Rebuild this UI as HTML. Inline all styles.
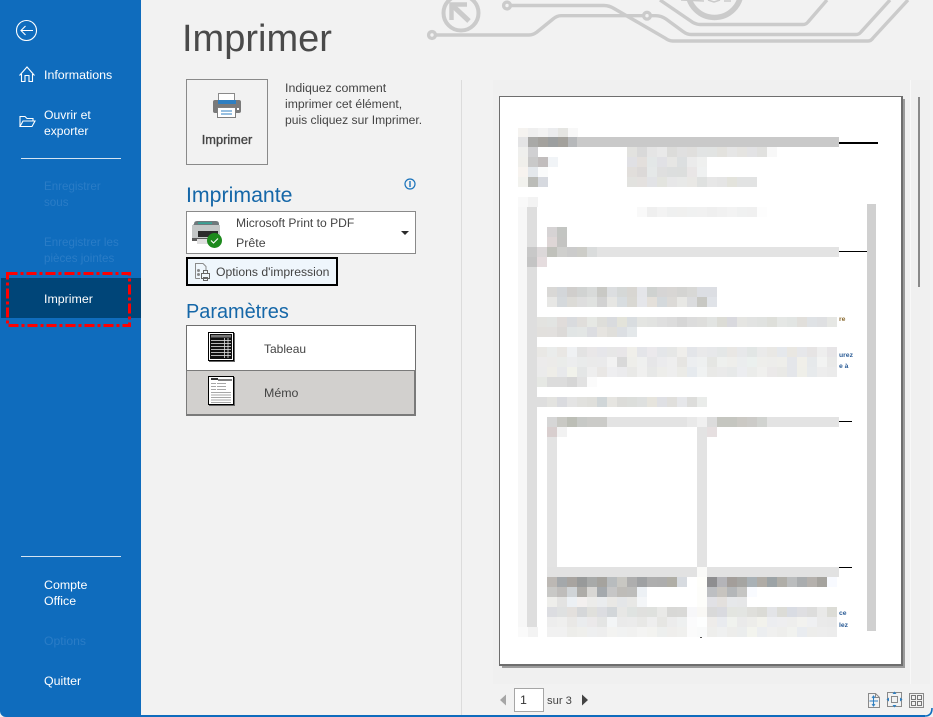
<!DOCTYPE html>
<html lang="fr"><head><meta charset="utf-8"><title>Imprimer</title>
<style>
html,body{margin:0;padding:0;width:933px;height:717px;overflow:hidden;background:#f2f2f2}
body{position:relative;font-family:"Liberation Sans",sans-serif;font-size:12.4px;color:#444}
.t{position:absolute;white-space:nowrap;line-height:16px}
.n{color:#fff}.d{color:#2a7cc6;font-size:11.6px}
.b{position:absolute}
.r{position:absolute;display:flex;height:10px}
.r i{display:block;width:10px;height:10px;flex:none}
.x{font-size:6.8px;font-weight:bold;color:#2b5c96}
svg{position:absolute;left:0;top:0}
</style></head><body>

<!-- circuit background -->
<svg width="933" height="60" viewBox="0 0 933 60" fill="none" stroke="#cbcbcb" stroke-width="3.4">
<path d="M507 5.5H604Q609 5.5 614 8.5L665 38Q669 41 673 41H868Q871 41 873 38L908 0"/>
<path d="M432 35H529Q533 35 537 32L553 19Q557 15.7 561 15.7H656Q661 15.7 666 19L683 31.5Q687 34.5 691 34.5H856Q859 34.5 861 32L890 0"/>
<path d="M660 0L693 22.5Q697 24.5 700 24.5H803Q806 24.5 808 22L827 0"/>
<circle cx="507" cy="5.5" r="3.4" fill="#f2f2f2"/><circle cx="432" cy="35" r="3.4" fill="#f2f2f2"/><circle cx="647" cy="15.7" r="3.4" fill="#f2f2f2"/>
<circle cx="714.5" cy="-9" r="26.5" stroke-width="5.5"/>
<circle cx="461" cy="13" r="17.5" stroke-width="4"/>
<path d="M451.5 20V4.5H467" stroke-width="4.4"/><path d="M453 6L469 21" stroke-width="5"/>
<path d="M681 0L704 1M714 2L708 0M714 2L720 0M724 1L731 1" stroke-width="1.5"/>
</svg>

<!-- frame & sidebar -->
<div class="b" style="left:0;top:0;width:141px;height:717px;background:#0f6cbd;border-bottom-left-radius:6px"></div>
<div class="b" style="left:141px;top:715px;width:784px;height:2px;background:#0f6cbd"></div>
<svg width="933" height="717" fill="none"><path d="M924 716H925Q932 716 932 708" stroke="#0f6cbd" stroke-width="1.6"/></svg>
<div class="b" style="left:1px;top:278px;width:140px;height:40px;background:#004578"></div>

<svg width="141" height="340" fill="none" stroke="#fff">
<circle cx="26.5" cy="30.5" r="10" stroke-width="1.1"/>
<path d="M21 30.5H33M25.5 26L21 30.5L25.5 35" stroke-width="1.1"/>
<path d="M19.5 75.5L27 67L34.5 75.5M21.5 74V81.5H25V75.5H29V81.5H32.5V74" stroke-width="1.1"/>
<path d="M20 126.5V116.5H25L27 118.5H33V121M20 126.5L23 121H35L32 126.5Z" stroke-width="1.1"/>
</svg>
<div class="t n" style="left:44px;top:67px">Informations</div>
<div class="t n" style="left:44px;top:107px;font-size:12.2px">Ouvrir et</div>
<div class="t n" style="left:44px;top:123px;font-size:12.1px">exporter</div>
<div class="b" style="left:21px;top:158px;width:100px;height:1px;background:#d5e4f2"></div>
<div class="t d" style="left:44px;top:179px">Enregistrer</div>
<div class="t d" style="left:44px;top:195px">sous</div>
<div class="t d" style="left:44px;top:235px">Enregistrer les</div>
<div class="t d" style="left:44px;top:251px">pièces jointes</div>
<div class="t n" style="left:44px;top:291px">Imprimer</div>
<div class="b" style="left:21px;top:556px;width:100px;height:1px;background:#d5e4f2"></div>
<div class="t n" style="left:44px;top:577px">Compte</div>
<div class="t n" style="left:44px;top:593px">Office</div>
<div class="t d" style="left:44px;top:633px;font-size:12.2px">Options</div>
<div class="t n" style="left:44px;top:673px">Quitter</div>
<svg width="141" height="340" fill="none"><rect x="7.5" y="273.5" width="122" height="52" stroke="#f00" stroke-width="3" stroke-dasharray="10 3 3 3"/></svg>

<!-- title -->
<div class="t" style="left:182px;top:17px;font-size:38px;line-height:44px;color:#4a4a4a">Imprimer</div>

<!-- print button -->
<div class="b" style="left:186px;top:79px;width:80px;height:84px;border:1px solid #8a8a8a"></div>
<svg width="300" height="130" viewBox="0 0 300 130">
<path fill="#fff" stroke="#8a8a8a" d="M218.5 93.5H234.5V102H218.5Z"/>
<rect x="213" y="100" width="28" height="13" rx="2" fill="#7a7a7a"/>
<rect x="218" y="100" width="18" height="4" fill="#2f7fc1"/>
<rect x="217.5" y="107.5" width="18" height="10" fill="#fff" stroke="#7f7f7f"/>
<path d="M221 111H232M221 114H232" stroke="#2f7fc1"/>
<rect x="237" y="108" width="2" height="2" fill="#fff"/>
</svg>
<div class="t" style="left:186px;top:132px;width:82px;text-align:center;font-size:12.8px;-webkit-text-stroke:.35px #444">Imprimer</div>
<div class="t" style="left:285px;top:80px">Indiquez comment</div>
<div class="t" style="left:285px;top:96px;font-size:12.2px">imprimer cet élément,</div>
<div class="t" style="left:285px;top:112px;font-size:12.1px">puis cliquez sur Imprimer.</div>

<!-- imprimante -->
<div class="t" style="left:186px;top:182px;font-size:21.3px;line-height:26px;color:#1567a8">Imprimante</div>
<svg width="430" height="200" fill="none"><circle cx="410" cy="184" r="5" stroke="#1a73bb" stroke-width="1.2"/><path d="M410 181V187" stroke="#1a73bb" stroke-width="1.4"/></svg>
<div class="b" style="left:186px;top:211px;width:228px;height:41px;border:1px solid #8a8a8a;background:#fff"></div>
<svg width="430" height="300">
<path d="M194 224Q194 221 197 221H216Q219 221 219 224V226H192Z" fill="#70797c"/>
<rect x="192" y="225" width="28" height="15" fill="#c4c7c7"/>
<rect x="198" y="222.5" width="14" height="1.2" fill="#1fb5a0"/>
<rect x="198" y="231" width="20" height="6" fill="#2b2b2b"/>
<rect x="192" y="238" width="28" height="3" fill="#5c5c5c"/>
<rect x="197" y="239" width="17" height="5" fill="#dfdfdf"/>
<circle cx="214.5" cy="240.5" r="7.5" fill="#1d8a1d"/>
<path d="M211 240.5L213.5 243L218 238.5" fill="none" stroke="#fff" stroke-width="1.1"/>
<path d="M401 231H409L405 235Z" fill="#2b2b2b"/>
</svg>
<div class="t" style="left:236px;top:215px;font-size:12.1px">Microsoft Print to PDF</div>
<div class="t" style="left:236px;top:235px">Prête</div>
<div class="b" style="left:186px;top:257px;width:148px;height:25px;border:2px solid #000;background:#eff6fc"></div>
<svg width="430" height="300" fill="none" stroke="#8a8a8a">
<path d="M195.5 278.5V263.5H203L206 266.5V270M195.5 278.5H200"/>
<circle cx="198.5" cy="270.5" r="1" fill="#8a8a8a"/><circle cx="198.5" cy="274.5" r="1" fill="#8a8a8a"/>
<path d="M203.5 270.5H207.5V273.5H203.5ZM201.5 273.5H209.5V278.5H201.5ZM203.5 277.5H207.5V280.5H203.5Z" stroke="#666"/>
</svg>
<div class="t" style="left:216px;top:264px;font-size:12.2px">Options d'impression</div>

<!-- parametres -->
<div class="t" style="left:186px;top:299px;font-size:19.9px;line-height:26px;color:#1567a8">Paramètres</div>
<div class="b" style="left:186px;top:325px;width:228px;height:44px;border:1px solid #6e6e6e;border-bottom:0;background:#fff"></div>
<div class="b" style="left:186px;top:370px;width:227px;height:43px;border:solid #7a7a7a;border-width:1px 2px 2px 1px;background:#d2d0ce"></div>
<div class="t" style="left:264px;top:341px;font-size:12px">Tableau</div>
<div class="t" style="left:264px;top:385px">Mémo</div>
<svg width="430" height="420">
<rect x="209" y="333" width="26" height="29" fill="#666"/>
<rect x="208.5" y="332.5" width="25" height="28" fill="#fff" stroke="#000"/>
<rect x="210" y="334" width="22" height="25" fill="#111"/>
<rect x="211" y="335" width="20" height="2.5" fill="#777"/>
<path d="M211 340.5H231M211 343.5H231M211 346.5H231M211 349.5H231M211 352.5H231M211 355.5H231" stroke="#eee" stroke-width=".8"/>
<path d="M224.5 338V358M228 338V358" stroke="#ddd" stroke-width=".8"/>
<rect x="209" y="377" width="26" height="29" fill="#666"/>
<rect x="208.5" y="376.5" width="25" height="28" fill="#fff" stroke="#000"/>
<path d="M211 379H218" stroke="#000" stroke-width="1.6"/><path d="M218 380H232" stroke="#000"/>
<path d="M211 383.5H216M211 386.5H216M211 389.5H216M217 383.5H226M217 386.5H226M217 389.5H226M211 392.5H231M211 395H231M211 397.5H231M211 400H231M211 402.5H231" stroke="#8a8a8a" stroke-width=".8"/>
</svg>

<!-- preview pane -->
<div class="b" style="left:461px;top:80px;width:1px;height:635px;background:#dcdcdc"></div>
<div class="b" style="left:493px;top:80px;width:437px;height:604px;background:#f0f0f0"></div>
<div class="b" style="left:910px;top:80px;width:1px;height:604px;background:#f8f8f8"></div>
<div class="b" style="left:918px;top:97px;width:2px;height:190px;background:#8a8a8a"></div>
<div class="b" style="left:502px;top:99px;width:403px;height:569px;background:#9c9c9c"></div>
<div class="b" style="left:499px;top:96px;width:401px;height:567px;border:1px solid #6e6e6e;border-right-width:2px;border-bottom-width:2px;background:#fff"></div>

<!-- blurred document -->
<div class="r" style="left:518px;top:128px"><i style="background:#f5f3f0"></i><i style="background:#efefef"></i><i style="background:#f3f3f3"></i><i style="background:#ebecee"></i><i style="background:#e5e5e2"></i><i style="background:#f8f8f8"></i></div>
<div class="r" style="left:518px;top:137px"><i style="background:#e4e4e5"></i><i style="background:#a9a9a7"></i><i style="background:#a4a29e"></i><i style="background:#9c9fa0"></i><i style="background:#a3a19c"></i><i style="background:#b6b8ba"></i></div>
<div class="b" style="left:577px;top:137px;width:262px;height:10px;background:#c9c9c9"></div>
<div class="b" style="left:839px;top:142px;width:39px;height:2px;background:#000"></div>
<div class="r" style="left:518px;top:147px"><i style="background:#efefed"></i><i style="background:#d0d0d2"></i></div>
<div class="r" style="left:518px;top:157px"><i style="background:#f0efeb"></i><i style="background:#c9c9c9"></i><i style="background:#c1bdbd"></i><i style="background:#f1f4f7"></i></div>
<div class="r" style="left:518px;top:167px"><i style="background:#f7f3ef"></i><i style="background:#e4e8ec"></i><i style="background:#fafbfb"></i></div>
<div class="r" style="left:518px;top:177px"><i style="background:#f2f2ee"></i><i style="background:#bbbcb8"></i><i style="background:#d6d9df"></i></div>
<div class="r" style="left:627px;top:147px"><i style="background:#e2e2df"></i><i style="background:#d9d9d9"></i><i style="background:#e5e5e5"></i><i style="background:#e9e9e9"></i><i style="background:#dcdcda"></i><i style="background:#e0e0e0"></i><i style="background:#e0dfdd"></i><i style="background:#e2e4e4"></i><i style="background:#e2e4e3"></i><i style="background:#e3e2de"></i><i style="background:#e6e6e6"></i><i style="background:#e5e4e1"></i><i style="background:#e3e3e5"></i><i style="background:#e1e1df"></i><i style="background:#f8f8f8"></i></div>
<div class="r" style="left:627px;top:157px"><i style="background:#e0e0e4"></i><i style="background:#e3dfdc"></i><i style="background:#e3e7e7"></i><i style="background:#e1e1e5"></i><i style="background:#e6e6e4"></i><i style="background:#dcdfe0"></i><i style="background:#ebebeb"></i><i style="background:#eff0ef"></i></div>
<div class="r" style="left:627px;top:167px"><i style="background:#e1dedb"></i><i style="background:#dcd9d8"></i><i style="background:#e5e8e8"></i><i style="background:#dfdfdf"></i><i style="background:#dcdede"></i><i style="background:#dcdedd"></i><i style="background:#e9e6e6"></i><i style="background:#eff1f1"></i></div>
<div class="r" style="left:627px;top:177px"><i style="background:#e2e2df"></i><i style="background:#e4e1df"></i><i style="background:#e2e3e6"></i><i style="background:#e3e4df"></i><i style="background:#e7e7e8"></i><i style="background:#e8e9e8"></i><i style="background:#e9e8e5"></i><i style="background:#dfe1e0"></i><i style="background:#e7e7e7"></i><i style="background:#e5e5e5"></i><i style="background:#e3e3dc"></i><i style="background:#e2e3e3"></i><i style="background:#e2e3e3"></i></div>
<div class="r" style="left:518px;top:197px"><i style="background:#f9f9f9"></i><i style="background:#f3f3f3"></i></div>
<div class="b" style="left:518px;top:207px;width:9px;height:420px;background:#f7f7f7"></div>
<div class="b" style="left:527px;top:207px;width:10px;height:420px;background:#dedede"></div>
<div class="r" style="left:518px;top:627px"><i style="background:#fafafa"></i><i style="background:#f3f3f3"></i></div>
<div class="r" style="left:637px;top:207px"><i style="background:#f9f9f9"></i><i style="background:#efefef"></i><i style="background:#f3f3f3"></i><i style="background:#eff0f0"></i><i style="background:#f0f0ef"></i><i style="background:#f0f1f1"></i><i style="background:#f1f1f1"></i><i style="background:#efefef"></i><i style="background:#f1f1f1"></i><i style="background:#f3f3f3"></i><i style="background:#f0f1f1"></i><i style="background:#f0f0f0"></i><i style="background:#fdfdfd"></i></div>
<div class="r" style="left:547px;top:227px"><i style="background:#d6d3d4"></i><i style="background:#c3c5c2"></i></div>
<div class="r" style="left:547px;top:237px"><i style="background:#ded6d6"></i><i style="background:#c4c4c2"></i></div>
<div class="r" style="left:527px;top:247px"><i style="background:#c8c8c8"></i><i style="background:#dcd8d9"></i><i style="background:#c0c1bb"></i><i style="background:#cfcfcd"></i><i style="background:#cbcbcb"></i><i style="background:#cdcdc8"></i><i style="background:#dadcdc"></i></div>
<div class="b" style="left:597px;top:247px;width:242px;height:10px;background:#e3e3e3"></div>
<div class="b" style="left:839px;top:251px;width:28px;height:1px;background:#000"></div>
<div class="r" style="left:527px;top:257px"><i style="background:#c4c4c4"></i><i style="background:#e5dcde"></i></div>
<div class="r" style="left:547px;top:287px"><i style="background:#d9d8d6"></i><i style="background:#d3d6d9"></i><i style="background:#d0cecc"></i><i style="background:#d1d3d2"></i><i style="background:#d8dad9"></i><i style="background:#c9c9c5"></i><i style="background:#dcdee0"></i><i style="background:#d5d8d7"></i><i style="background:#d8d6d2"></i><i style="background:#e4e5e9"></i><i style="background:#cfd2d0"></i><i style="background:#d6d5d5"></i><i style="background:#d8d6d4"></i><i style="background:#d4d4d2"></i><i style="background:#d8d8d6"></i><i style="background:#dcdee3"></i><i style="background:#dcdee3"></i></div>
<div class="r" style="left:547px;top:297px"><i style="background:#e7e7e5"></i><i style="background:#d5d9dc"></i><i style="background:#dcdbd7"></i><i style="background:#dedede"></i><i style="background:#e0e2e0"></i><i style="background:#d2d2d2"></i><i style="background:#e6e6e3"></i><i style="background:#d8dde0"></i><i style="background:#d9d8d3"></i><i style="background:#e5e6ea"></i><i style="background:#e4e0da"></i><i style="background:#d4d9dc"></i><i style="background:#dcdad7"></i><i style="background:#e8e8e5"></i><i style="background:#dbdcde"></i><i style="background:#c8c8c3"></i><i style="background:#e0e3e8"></i></div>
<div class="r" style="left:537px;top:317px"><i style="background:#e3e3e0"></i><i style="background:#e2e4e2"></i><i style="background:#e0dcda"></i><i style="background:#d9dbde"></i><i style="background:#e0dedb"></i><i style="background:#e6e8e4"></i><i style="background:#dededa"></i><i style="background:#d9dbde"></i><i style="background:#e3e3da"></i><i style="background:#d9dde0"></i><i style="background:#e4e5e2"></i><i style="background:#e2e3e1"></i><i style="background:#dfdfdf"></i><i style="background:#dcdcdc"></i><i style="background:#d6d6d6"></i><i style="background:#dcdcdc"></i><i style="background:#dededc"></i><i style="background:#e2e4e2"></i><i style="background:#dcdcd6"></i><i style="background:#d9d9de"></i><i style="background:#e5e5e2"></i><i style="background:#e2e3e2"></i><i style="background:#e0e2e0"></i><i style="background:#dedfda"></i><i style="background:#e5e7e5"></i><i style="background:#e2e5e3"></i><i style="background:#e1dfdb"></i><i style="background:#dfe2e5"></i><i style="background:#dfe0e2"></i><i style="background:#e6e7e4"></i></div>
<div class="r" style="left:537px;top:327px"><i style="background:#e2e0dd"></i><i style="background:#e2e0de"></i><i style="background:#dcdad8"></i><i style="background:#e1e5e5"></i><i style="background:#e3e6e5"></i><i style="background:#dcdde1"></i><i style="background:#e6e4e0"></i><i style="background:#e0dfdb"></i><i style="background:#dcdfe3"></i><i style="background:#e4e8ea"></i></div>
<div class="r" style="left:537px;top:347px"><i style="background:#e9e8e5"></i><i style="background:#eaeceb"></i><i style="background:#e9e7e4"></i><i style="background:#eff1f3"></i><i style="background:#e3e3e3"></i><i style="background:#e9e7e8"></i><i style="background:#e6e6ea"></i><i style="background:#e7e7e7"></i><i style="background:#e8e6e8"></i><i style="background:#f0efea"></i><i style="background:#e4e5e9"></i><i style="background:#ebe9ec"></i><i style="background:#e4e6e9"></i><i style="background:#e6e7e6"></i><i style="background:#efeeeb"></i><i style="background:#e3e5e9"></i><i style="background:#e9e9ea"></i><i style="background:#e7e8ea"></i><i style="background:#e4e7e7"></i><i style="background:#e9e7e4"></i><i style="background:#e7e8ea"></i><i style="background:#e2e6e5"></i><i style="background:#eaeaea"></i><i style="background:#e9e8e5"></i><i style="background:#e5e8ec"></i><i style="background:#e9e7e2"></i><i style="background:#e6e7ea"></i><i style="background:#e6e4e4"></i><i style="background:#eeeeee"></i><i style="background:#e7e5e7"></i></div>
<div class="r" style="left:537px;top:357px"><i style="background:#ecebeb"></i><i style="background:#ecebe9"></i><i style="background:#eaecea"></i><i style="background:#ecedee"></i><i style="background:#e9ebeb"></i><i style="background:#eaeaea"></i><i style="background:#eaeaeb"></i><i style="background:#f2f2f2"></i><i style="background:#d9d9d9"></i><i style="background:#eeeeea"></i><i style="background:#eff0ef"></i><i style="background:#e6e6e8"></i><i style="background:#ebebed"></i><i style="background:#eeeeee"></i><i style="background:#e6e5e2"></i><i style="background:#eceef0"></i><i style="background:#eef0f0"></i><i style="background:#e5e6e3"></i><i style="background:#eef0ee"></i><i style="background:#eeeeeb"></i><i style="background:#ebedee"></i><i style="background:#ebf0ee"></i><i style="background:#eeeeeb"></i><i style="background:#ededeb"></i><i style="background:#eeeeea"></i><i style="background:#e4e6ea"></i><i style="background:#f0efe9"></i><i style="background:#e6e9eb"></i><i style="background:#f2f3f2"></i><i style="background:#e9e9e8"></i></div>
<div class="r" style="left:537px;top:367px"><i style="background:#ebebeb"></i><i style="background:#eeede8"></i><i style="background:#e8e9eb"></i><i style="background:#f1f2eb"></i><i style="background:#e4e6e6"></i><i style="background:#eeeeee"></i><i style="background:#e9e7e5"></i><i style="background:#eeeef0"></i><i style="background:#ebebed"></i><i style="background:#e9e9e7"></i><i style="background:#f0f0ef"></i><i style="background:#e7e8e7"></i><i style="background:#ededea"></i><i style="background:#eeeeee"></i><i style="background:#ebebe7"></i><i style="background:#e6eaee"></i><i style="background:#f0f2f2"></i><i style="background:#e9e9e7"></i><i style="background:#eaeaea"></i><i style="background:#e7e9e9"></i><i style="background:#ecedf0"></i><i style="background:#ebecea"></i><i style="background:#f0f0ee"></i><i style="background:#ebe9e9"></i><i style="background:#e9e9e6"></i><i style="background:#e4e6ea"></i><i style="background:#efefe9"></i><i style="background:#e7eaec"></i><i style="background:#ededed"></i><i style="background:#ebebeb"></i></div>
<div class="r" style="left:537px;top:377px"><i style="background:#e6e8e4"></i><i style="background:#dcdcdc"></i><i style="background:#dcdcdc"></i><i style="background:#d6d6d6"></i><i style="background:#e2e2e2"></i><i style="background:#fbfbfb"></i></div>
<div class="r" style="left:537px;top:397px"><i style="background:#dedede"></i><i style="background:#e3e3e0"></i><i style="background:#dadbdf"></i><i style="background:#e4e4e4"></i><i style="background:#e1e1de"></i><i style="background:#dfdfdb"></i><i style="background:#d0d6d8"></i><i style="background:#e6e5e1"></i><i style="background:#dcdcd9"></i><i style="background:#dcdedb"></i><i style="background:#dee0df"></i><i style="background:#e6e4dd"></i><i style="background:#dfe0e4"></i><i style="background:#e0dfdc"></i><i style="background:#e6e7ea"></i><i style="background:#dddddb"></i><i style="background:#eaecea"></i></div>
<div class="r" style="left:547px;top:417px"><i style="background:#d6d6d6"></i><i style="background:#c9c9c4"></i><i style="background:#bcbeb6"></i><i style="background:#c7c9c6"></i><i style="background:#cbcbc8"></i><i style="background:#cbcbc8"></i></div>
<div class="b" style="left:607px;top:417px;width:80px;height:10px;background:#e3e3e3"></div>
<div class="r" style="left:687px;top:417px"><i style="background:#e9e9e9"></i><i style="background:#f0f0f0"></i><i style="background:#dcdcdc"></i><i style="background:#c5c6c0"></i><i style="background:#c5c6c0"></i><i style="background:#cbc9c4"></i><i style="background:#cccbc8"></i><i style="background:#d1d3d0"></i></div>
<div class="b" style="left:767px;top:417px;width:72px;height:10px;background:#e3e3e3"></div>
<div class="b" style="left:839px;top:421px;width:13px;height:1px;background:#000"></div>
<div class="r" style="left:547px;top:427px"><i style="background:#d8cece"></i><i style="background:#f2f2f2"></i></div>
<div class="r" style="left:697px;top:427px"><i style="background:#e3e3e3"></i><i style="background:#e6dfe0"></i></div>
<div class="b" style="left:547px;top:437px;width:10px;height:130px;background:#e3e3e3"></div>
<div class="b" style="left:697px;top:437px;width:10px;height:130px;background:#e3e3e3"></div>
<div class="b" style="left:547px;top:567px;width:150px;height:10px;background:#e2e2e2"></div>
<div class="b" style="left:697px;top:567px;width:10px;height:10px;background:#fafaf8"></div>
<div class="b" style="left:707px;top:567px;width:132px;height:10px;background:#e2e2e2"></div>
<div class="b" style="left:839px;top:567px;width:13px;height:1px;background:#000"></div>
<div class="r" style="left:547px;top:577px"><i style="background:#bcb8b4"></i><i style="background:#a4a8ab"></i><i style="background:#a8a4a0"></i><i style="background:#989a9a"></i><i style="background:#a8aaa9"></i><i style="background:#a5a39e"></i><i style="background:#b8bcbe"></i><i style="background:#c8c7c2"></i><i style="background:#aeaeae"></i><i style="background:#9fa1a3"></i><i style="background:#aeaeae"></i><i style="background:#adadad"></i><i style="background:#b0aea6"></i><i style="background:#d7dbe0"></i></div>
<div class="r" style="left:697px;top:577px"><i style="background:#fefefa"></i><i style="background:#8e8e90"></i><i style="background:#b4b4b8"></i><i style="background:#a39e9a"></i><i style="background:#a5a5a2"></i><i style="background:#a9b1b6"></i><i style="background:#b0aca6"></i><i style="background:#9ca3a6"></i><i style="background:#b0aea8"></i><i style="background:#bbbdbe"></i><i style="background:#aaadaf"></i><i style="background:#b5b1ad"></i><i style="background:#a5a39e"></i><i style="background:#f8faff"></i></div>
<div class="r" style="left:547px;top:587px"><i style="background:#c8c8c6"></i><i style="background:#bfbdbb"></i><i style="background:#d0d4d7"></i><i style="background:#aeaca8"></i><i style="background:#d8d7d4"></i><i style="background:#a4a9ad"></i><i style="background:#c6c6c6"></i><i style="background:#bebcb8"></i><i style="background:#bdbdbb"></i><i style="background:#edf1f5"></i></div>
<div class="r" style="left:697px;top:587px"><i style="background:#fdfdfa"></i><i style="background:#bdbfc2"></i><i style="background:#c7c4bf"></i><i style="background:#b4b7b9"></i><i style="background:#c5c5c3"></i><i style="background:#f9fbff"></i></div>
<div class="r" style="left:547px;top:597px"><i style="background:#eeeeeb"></i><i style="background:#e3e3e2"></i><i style="background:#ecf0f4"></i><i style="background:#f3f0ef"></i><i style="background:#ececea"></i><i style="background:#eaecee"></i><i style="background:#e9e8e5"></i><i style="background:#e4e6e8"></i><i style="background:#e8e8e6"></i><i style="background:#f4f6f8"></i></div>
<div class="r" style="left:697px;top:597px"><i style="background:#fdfdfa"></i><i style="background:#e1e1e5"></i><i style="background:#e3e0dd"></i><i style="background:#e6e8ea"></i><i style="background:#e6e7e8"></i></div>
<div class="r" style="left:547px;top:607px"><i style="background:#dcdde1"></i><i style="background:#dfe1e1"></i><i style="background:#e3e0dd"></i><i style="background:#d5d7d9"></i><i style="background:#e0e0dc"></i><i style="background:#dcdde1"></i><i style="background:#d2d6d9"></i><i style="background:#e7e7e5"></i><i style="background:#dfe3e1"></i><i style="background:#e0e0de"></i><i style="background:#dfe1de"></i><i style="background:#e9e9e7"></i><i style="background:#d8d8d6"></i><i style="background:#d9d9d7"></i><i style="background:#f7f7f9"></i><i style="background:#f9f8f5"></i><i style="background:#d9d9d9"></i><i style="background:#d9dadf"></i><i style="background:#e3e5e0"></i><i style="background:#e3e5e2"></i><i style="background:#dfdfdb"></i><i style="background:#dbdbd6"></i><i style="background:#e3e4e7"></i><i style="background:#dcdcd7"></i><i style="background:#d9dce3"></i><i style="background:#dfdfe2"></i><i style="background:#dddddc"></i><i style="background:#e9e9e8"></i><i style="background:#dcdcd6"></i></div>
<div class="r" style="left:547px;top:617px"><i style="background:#ededed"></i><i style="background:#efefee"></i><i style="background:#e9e8e6"></i><i style="background:#eaecee"></i><i style="background:#ebe9ea"></i><i style="background:#e4e5e4"></i><i style="background:#f3f5f6"></i><i style="background:#eaeaea"></i><i style="background:#ebebeb"></i><i style="background:#e8e8e6"></i><i style="background:#eeeeee"></i><i style="background:#e6e6e3"></i><i style="background:#ececec"></i><i style="background:#eef0f0"></i><i style="background:#fbfbfc"></i><i style="background:#fdfefe"></i><i style="background:#eeecea"></i><i style="background:#e9ebef"></i><i style="background:#f0f2ee"></i><i style="background:#eaeaea"></i><i style="background:#ededea"></i><i style="background:#f2f2ec"></i><i style="background:#ecedf0"></i><i style="background:#eeeef0"></i><i style="background:#eeeeed"></i><i style="background:#f2f2ef"></i><i style="background:#eff0f2"></i><i style="background:#eaeaea"></i><i style="background:#e9e9e9"></i></div>
<div class="r" style="left:547px;top:627px"><i style="background:#f1f1f1"></i><i style="background:#f1f1f1"></i><i style="background:#ededea"></i><i style="background:#efefec"></i><i style="background:#eeeff0"></i><i style="background:#eeeeee"></i><i style="background:#f3f3f1"></i><i style="background:#f1f2f2"></i><i style="background:#f1f1f0"></i><i style="background:#f4f4f3"></i><i style="background:#f3f3f0"></i><i style="background:#edefee"></i><i style="background:#efeeec"></i><i style="background:#f0f0ee"></i><i style="background:#fbfbfb"></i><i style="background:#f9fafa"></i><i style="background:#eeeeec"></i><i style="background:#eff0f0"></i><i style="background:#ededeb"></i><i style="background:#ebeded"></i><i style="background:#f3f4ee"></i><i style="background:#eceef0"></i><i style="background:#f0f0ef"></i><i style="background:#eeeeec"></i><i style="background:#f1f2ef"></i><i style="background:#e9ecf0"></i><i style="background:#ededeb"></i><i style="background:#ededed"></i><i style="background:#ececec"></i></div>
<div class="b" style="left:700px;top:637px;width:2px;height:1px;background:#555"></div>
<div class="b" style="left:867px;top:204px;width:9px;height:427px;background:#d0d0d0"></div>
<div class="t x" style="left:839px;top:312px;color:#8a6a30">re</div>
<div class="t x" style="left:839px;top:348px">urez</div>
<div class="t x" style="left:839px;top:359px">e à</div>
<div class="t x" style="left:839px;top:606px">ce</div>
<div class="t x" style="left:839px;top:618px">lez</div>

<!-- footer controls -->
<div class="b" style="left:514px;top:688px;width:28px;height:22px;border:1px solid #a6a6a6;background:#fff"></div>
<div class="t" style="left:520px;top:692px;color:#333">1</div>
<div class="t" style="left:547px;top:693px;font-size:11.2px">sur 3</div>
<svg width="933" height="717" fill="none">
<path d="M506 694.5V705.5L500 700Z" fill="#a6a6a6"/>
<path d="M582 694.5V705.5L588 700Z" fill="#444"/>
<path d="M868.5 707.5V693.5H875.5L879.5 697.5V707.5Z" stroke="#8a8a8a"/>
<path d="M875.5 693.5V697.5H879.5" stroke="#8a8a8a"/>
<path d="M873.5 696V706M869.5 701H878M872 698L873.5 696L875 698M872 704L873.5 706L875 704" stroke="#2f7fc1"/>
<rect x="887.5" y="692.5" width="14" height="14" stroke="#8a8a8a"/>
<rect x="891.5" y="696.5" width="6" height="6" stroke="#8a8a8a"/>
<path d="M892.5 694H896.5L894.5 691.5ZM892.5 705H896.5L894.5 707.5ZM889 697.5V701.5L886.5 699.5ZM900 697.5V701.5L902.5 699.5Z" fill="#2f7fc1"/>
<rect x="909.5" y="693.5" width="14" height="14" stroke="#8a8a8a"/>
<rect x="911.5" y="695.5" width="4" height="4" stroke="#777"/><rect x="917.5" y="695.5" width="4" height="4" stroke="#777"/>
<rect x="911.5" y="701.5" width="4" height="4" stroke="#777"/><rect x="917.5" y="701.5" width="4" height="4" stroke="#777"/>
</svg>
</body></html>
